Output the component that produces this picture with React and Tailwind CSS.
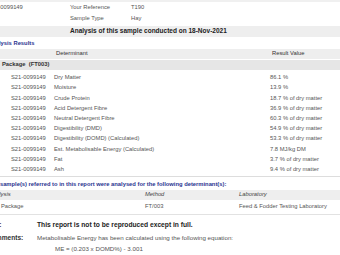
import React from "react";

const rows = [
    ["Dry Matter", "86.1 %"],
    ["Moisture", "13.9 %"],
    ["Crude Protein", "18.7 % of dry matter"],
    ["Acid Detergent Fibre", "36.9 % of dry matter"],
    ["Neutral Detergent Fibre", "60.3 % of dry matter"],
    ["Digestibility (DMD)", "54.9 % of dry matter"],
    ["Digestibility (DOMD) (Calculated)", "53.3 % of dry matter"],
    ["Est. Metabolisable Energy (Calculated)", "7.8 MJ/kg DM"],
    ["Fat", "3.7 % of dry matter"],
    ["Ash", "9.4 % of dry matter"],
];

export default function App() {
    return (
        <div className="w-[340px] h-[255px] overflow-hidden bg-white text-[#555] text-[5.8px] leading-none" style={{ fontFamily: "'Liberation Sans', Arial, sans-serif" }}>
            <div className="-ml-[16px] w-[356px]">
                <div className="h-[2px] bg-[#f0f0f0]" />
                <div className="flex h-[11px] items-center">
                    <div className="w-[86px] pl-[4px]">S21-0099149</div>
                    <div className="w-[61px]">Your Reference</div>
                    <div>T190</div>
                </div>
                <div className="flex h-[11px] items-center">
                    <div className="w-[86px]" />
                    <div className="w-[61px]">Sample Type</div>
                    <div>Hay</div>
                </div>
                <div className="mt-[2px] h-[11px] bg-[#eeeeee] flex items-center pl-[86px] font-bold text-[#222] text-[6.5px]">
                    Analysis of this sample conducted on 18-Nov-2021
                </div>
                <div className="mt-[3px] h-[8px] flex items-center pl-[4px] font-bold text-[#2a3490]">Analysis Results</div>
                <div className="mt-[1px] h-[10px] bg-[#eeeeee] flex items-center text-[#333]">
                    <div className="w-[288px] pl-[72px]">Determinant</div>
                    <div>Result Value</div>
                </div>
                <div className="mt-[1px] h-[10px] bg-[#e6e6e6] flex items-center pl-[18px] font-bold text-[#333] whitespace-pre">
                    Package  (FT003)
                </div>
                <div className="mt-[3px]">
                    {rows.map(([name, value]) => (
                        <div key={name} className="flex h-[10.2px] items-center">
                            <div className="w-[70px] pl-[27px]">S21-0099149</div>
                            <div className="w-[216px]">{name}</div>
                            <div>{value}</div>
                        </div>
                    ))}
                </div>
                <div className="mt-[1px] h-px bg-[#dddddd]" />
                <div className="mt-[4px] h-[8px] flex items-center pl-[4px] font-bold text-[#2a3490]">
                    The sample(s) referred to in this report were analysed for the following determinant(s):
                </div>
                <div className="mt-[1px] h-[10px] bg-[#eeeeee] flex items-center italic text-[#444]">
                    <div className="w-[161px] pl-[5px]">Analysis</div>
                    <div className="w-[94px]">Method</div>
                    <div>Laboratory</div>
                </div>
                <div className="h-[15px] flex items-center border-b border-[#e2e2e2]">
                    <div className="w-[161px] pl-[5px]">Hay Package</div>
                    <div className="w-[94px]">FT/003</div>
                    <div>Feed &amp; Fodder Testing Laboratory</div>
                </div>
                <div className="mt-[5px] h-[11px] flex items-center text-[6.2px]">
                    <div className="w-[56px] -ml-[3px] font-bold text-[#333] text-[6.6px]">Notes:</div>
                    <div className="font-bold text-[#222] text-[6.7px]">This report is not to be reproduced except in full.</div>
                </div>
                <div className="mt-[2px] h-[11px] flex items-center text-[6.2px]">
                    <div className="w-[53px] pl-[3px] font-bold text-[#333] text-[6.6px]">Comments:</div>
                    <div>Metabolisable Energy has been calculated using the following equation:</div>
                </div>
                <div className="h-[11px] flex items-center pl-[71px] text-[6.2px]">ME = (0.203 x DOMD%) - 3.001</div>
            </div>
        </div>
    );
}
